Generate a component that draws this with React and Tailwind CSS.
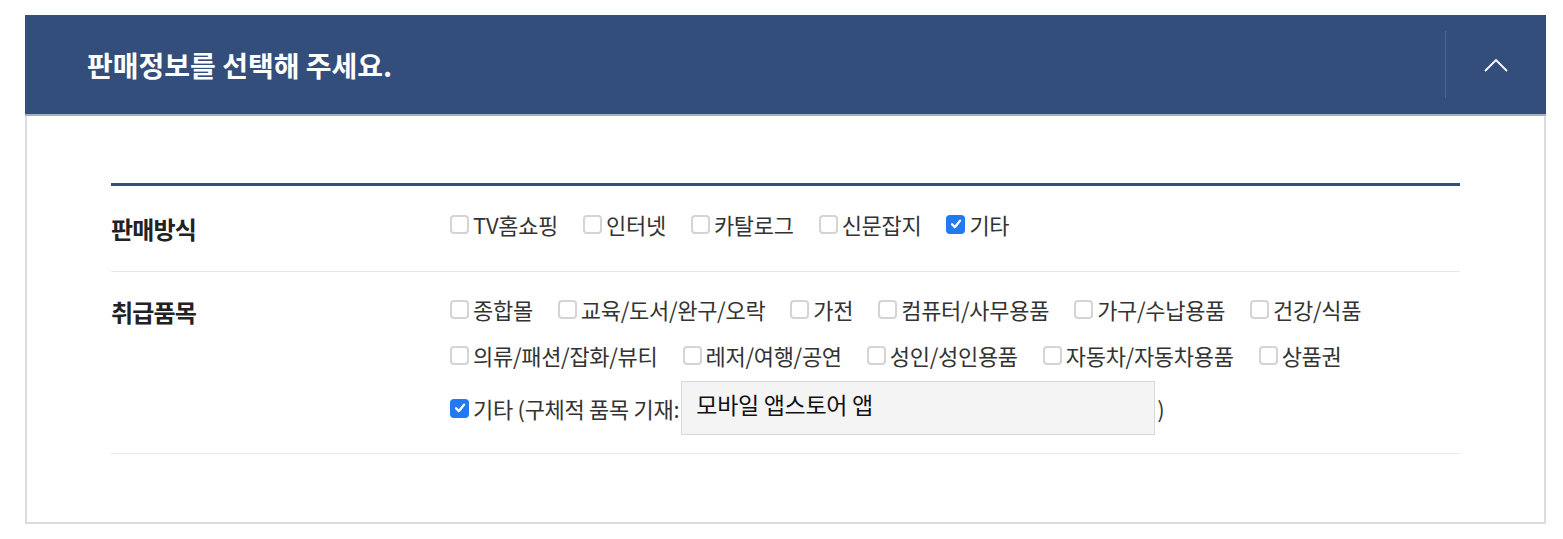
import React, { useState } from "react";

const FONT = "font-['Noto_Sans_CJK_KR','Noto_Sans',sans-serif]";

function Check({ checked, label, onToggle }) {
  return (
    <label className="flex items-center cursor-pointer select-none" onClick={onToggle}>
      <span
        className={
          checked
            ? "w-[19px] h-[19px] rounded-[4px] bg-[#2379f2] flex items-center justify-center shrink-0"
            : "w-[19px] h-[19px] rounded-[4px] border-2 border-[#d4d4d4] bg-white shrink-0"
        }
      >
        {checked && (
          <svg width="14" height="14" viewBox="0 0 12 12" fill="none">
            <path d="M2.6 6.2 L5 8.7 L9.5 3.1" stroke="white" strokeWidth="2" strokeLinecap="round" strokeLinejoin="round" />
          </svg>
        )}
      </span>
      <span className="ml-[4px] text-[22px] tracking-[-0.3px] text-[#333]">{label}</span>
    </label>
  );
}

export default function App() {
  const [open, setOpen] = useState(true);
  const [method, setMethod] = useState({ 기타: true });
  const [items, setItems] = useState({ 기타: true });
  const [detail, setDetail] = useState("모바일 앱스토어 앱");

  const toggleMethod = (k) => setMethod({ ...method, [k]: !method[k] });
  const toggleItem = (k) => setItems({ ...items, [k]: !items[k] });

  const methods = ["TV홈쇼핑", "인터넷", "카탈로그", "신문잡지", "기타"];
  const line1 = ["종합몰", "교육/도서/완구/오락", "가전", "컴퓨터/사무용품", "가구/수납용품", "건강/식품"];
  const line2 = ["의류/패션/잡화/뷰티", "레저/여행/공연", "성인/성인용품", "자동차/자동차용품", "상품권"];

  return (
    <div className={`bg-white px-[25px] pt-[15px] pb-[16px] ${FONT}`}>
      <div className="w-[1521px]">
        {/* header */}
        <div className="h-[101px] bg-[#344e7b] border-b-2 border-[#a7b0c0] flex items-center">
          <h1 className="flex-1 pl-[62px] text-white text-[28px] font-bold">
            판매정보를 선택해 주세요.
          </h1>
          <div className="h-[67px] w-px bg-[#4d6490]" />
          <button className="w-[100px] h-full flex items-center justify-center" onClick={() => setOpen(!open)}>
            <svg width="24" height="14" viewBox="0 0 24 14" fill="none">
              <path d={open ? "M1 13 L12 2 L23 13" : "M1 1 L12 12 L23 1"} stroke="white" strokeWidth="1.8" />
            </svg>
          </button>
        </div>

        {/* body */}
        {open && (
          <div className="border-2 border-t-0 border-[#dcdcdc] px-[84px] pt-[67px] pb-[68px]">
            <div className="border-t-[3px] border-[#344e7b]">
              <div className="flex border-b border-[#e8e8e8] pt-[15px] pb-[24px]">
                <div className="w-[339px] pt-[10px] text-[24px] font-bold text-[#222] tracking-[-0.8px] leading-[36px]">
                  판매방식
                </div>
                <div className="flex items-center h-[46px] gap-x-[25px]">
                  {methods.map((m) => (
                    <Check key={m} label={m} checked={!!method[m]} onToggle={() => toggleMethod(m)} />
                  ))}
                </div>
              </div>

              <div className="flex border-b border-[#e8e8e8] pt-[14px] pb-[18px]">
                <div className="w-[339px] pt-[8px] text-[24px] font-bold text-[#222] tracking-[-0.8px] leading-[36px]">
                  취급품목
                </div>
                <div className="flex flex-col">
                  <div className="flex items-center h-[46px] gap-x-[25px]">
                    {line1.map((m) => (
                      <Check key={m} label={m} checked={!!items[m]} onToggle={() => toggleItem(m)} />
                    ))}
                  </div>
                  <div className="flex items-center h-[46px] gap-x-[25px]">
                    {line2.map((m) => (
                      <Check key={m} label={m} checked={!!items[m]} onToggle={() => toggleItem(m)} />
                    ))}
                  </div>
                  <div className="flex items-center mt-[3px]">
                    <Check label="기타 (구체적 품목 기재:" checked={!!items["기타"]} onToggle={() => toggleItem("기타")} />
                    <input
                      value={detail}
                      onChange={(e) => setDetail(e.target.value)}
                      className="ml-[2px] w-[474px] h-[54px] bg-[#f4f4f4] border border-[#d9d9d9] px-[14px] pb-[8px] text-[23px] tracking-[-0.3px] text-[#111] outline-none"
                    />
                    <span className="ml-[2px] text-[22px] text-[#333]">)</span>
                  </div>
                </div>
              </div>
            </div>
          </div>
        )}
      </div>
    </div>
  );
}
